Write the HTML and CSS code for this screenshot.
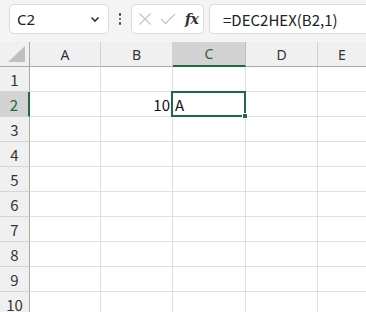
FILE: index.html
```html
<!DOCTYPE html>
<html>
<head>
<meta charset="utf-8">
<link rel="stylesheet" href="styles.css">
</head>
<body>
<div class="app">
  <div class="toolbar">
    <div class="namebox">
      <span class="ref">C2</span>
      <svg class="chev" width="10" height="7" viewBox="0 0 10 7"><path d="M1.5 1.5 L5 5 L8.5 1.5" fill="none" stroke="#333" stroke-width="1.6"/></svg>
    </div>
    <div class="kebab"><i></i><i></i><i></i></div>
    <div class="fbtns">
      <svg class="ico" width="14" height="14" viewBox="0 0 14 14"><path d="M1.5 1.5 L12.5 12.5 M12.5 1.5 L1.5 12.5" stroke="#c4c4c4" stroke-width="1.2" fill="none"/></svg>
      <svg class="ico" width="16" height="12" viewBox="0 0 16 12"><path d="M1 6 L5.5 10.5 L15 1" stroke="#c4c4c4" stroke-width="1.2" fill="none"/></svg>
      <span class="fx">fx</span>
    </div>
    <div class="formula">=DEC2HEX(B2,1)</div>
  </div>
  <div class="sheet">
    <div class="hdr corner"><svg width="18" height="16" viewBox="0 0 18 16"><polygon points="17,0 17,16 0,16" fill="#c0c0c0"/></svg></div>
    <div class="hdr col">A</div>
    <div class="hdr col">B</div>
    <div class="hdr col sel">C</div>
    <div class="hdr col">D</div>
    <div class="hdr col last">E</div>

    <div class="hdr row">1</div><div class="c"></div><div class="c"></div><div class="c"></div><div class="c"></div><div class="c last"></div>
    <div class="hdr row rsel">2</div><div class="c"></div><div class="c num">10</div><div class="c active">A<div class="selbox"><span class="handle"></span></div></div><div class="c"></div><div class="c last"></div>
    <div class="hdr row">3</div><div class="c"></div><div class="c"></div><div class="c"></div><div class="c"></div><div class="c last"></div>
    <div class="hdr row">4</div><div class="c"></div><div class="c"></div><div class="c"></div><div class="c"></div><div class="c last"></div>
    <div class="hdr row">5</div><div class="c"></div><div class="c"></div><div class="c"></div><div class="c"></div><div class="c last"></div>
    <div class="hdr row">6</div><div class="c"></div><div class="c"></div><div class="c"></div><div class="c"></div><div class="c last"></div>
    <div class="hdr row">7</div><div class="c"></div><div class="c"></div><div class="c"></div><div class="c"></div><div class="c last"></div>
    <div class="hdr row">8</div><div class="c"></div><div class="c"></div><div class="c"></div><div class="c"></div><div class="c last"></div>
    <div class="hdr row">9</div><div class="c"></div><div class="c"></div><div class="c"></div><div class="c"></div><div class="c last"></div>
    <div class="hdr row">10</div><div class="c"></div><div class="c"></div><div class="c"></div><div class="c"></div><div class="c last"></div>
  </div>
</div>
</body>
</html>
```
FILE: styles.css
```css
* { box-sizing: border-box; }
html, body { margin: 0; padding: 0; }
body {
  width: 366px;
  height: 312px;
  overflow: hidden;
  background: #ffffff;
  font-family: "Noto Sans", "Noto Sans CJK JP", sans-serif;
}
.app {
  width: 366px;
  height: 312px;
  overflow: hidden;
  background: #f4f4f4;
}
.toolbar {
  display: flex;
  align-items: center;
  height: 42px;
  padding: 4px 0 8px 9px;
}
.namebox {
  width: 100px;
  height: 30px;
  background: #fff;
  border: 1px solid #dadada;
  border-radius: 5px;
  display: flex;
  align-items: center;
  justify-content: space-between;
  padding: 0 8px 0 7px;
}
.ref {
  font-family: "Noto Sans", sans-serif;
  font-size: 15px;
  color: #222;
}
.chev { margin-top: 1px; }
.kebab {
  width: 22px;
  display: flex;
  flex-direction: column;
  align-items: center;
  gap: 2px;
}
.kebab i {
  display: block;
  width: 2.5px;
  height: 2.5px;
  background: #444;
  border-radius: 50%;
}
.fbtns {
  width: 73px;
  height: 30px;
  background: #fff;
  border: 1px solid #dadada;
  border-radius: 5px;
  display: flex;
  align-items: center;
  padding: 0 4px 0 6px;
  gap: 8px;
}
.fx {
  font-family: "DejaVu Serif", "Liberation Serif", serif;
  font-style: italic;
  font-weight: bold;
  font-size: 14px;
  color: #333;
  margin-left: 1px;
  letter-spacing: -0.5px;
}
.formula {
  margin-left: 5px;
  flex: 1;
  height: 30px;
  background: #fff;
  border: 1px solid #dadada;
  border-right: none;
  border-radius: 5px 0 0 5px;
  display: flex;
  align-items: center;
  padding-left: 13px;
  font-family: "Noto Sans CJK JP", "Noto Sans", sans-serif;
  font-size: 15px;
  color: #222;
  white-space: nowrap;
}
.sheet {
  display: grid;
  grid-template-columns: 30px 71px 72px 73px 72px 1fr;
  grid-auto-rows: 25px;
  background: #fff;
}
.hdr {
  background: #f0f0f0;
  color: #333;
  display: flex;
  align-items: center;
  justify-content: center;
  font-family: "Noto Sans", sans-serif;
  font-size: 14px;
}
.col {
  border-right: 1px solid #d0d0d0;
  border-bottom: 1px solid #a8a8a8;
}
.col.last { border-right: none; }
.corner {
  border-right: 1px solid #a8a8a8;
  border-bottom: 1px solid #a8a8a8;
  align-items: flex-end;
  justify-content: flex-start;
  padding: 0 0 4px 8px;
}
.row {
  border-right: 1px solid #a8a8a8;
  border-bottom: 1px solid #d4d4d4;
  font-family: "Noto Sans CJK JP", "Noto Sans", sans-serif;
  font-size: 15px;
  color: #333;
}
.col.sel {
  background: #d3d3d3;
  color: #1e6b41;
  border-bottom: 2px solid #1e6b41;
  border-right: 1px solid #c0c0c0;
}
.row.rsel {
  background: #d3d3d3;
  color: #1e6b41;
  border-right: 2px solid #1e6b41;
}
.c {
  border-right: 1px solid #e0e0e0;
  border-bottom: 1px solid #e0e0e0;
  font-family: "Noto Sans CJK JP", "Noto Sans", sans-serif;
  font-size: 15px;
  color: #111;
  display: flex;
  align-items: center;
  padding: 0 2px;
}
.c.last { border-right: none; }
.num { justify-content: flex-end; }
.active { position: relative; }
.selbox {
  position: absolute;
  left: -2px;
  top: -1px;
  right: -1px;
  bottom: -1px;
  border: 2px solid #1e6b41;
}
.handle {
  position: absolute;
  right: -4px;
  bottom: -4px;
  width: 6px;
  height: 6px;
  background: #1e6b41;
  border: 1px solid #fff;
}
```
